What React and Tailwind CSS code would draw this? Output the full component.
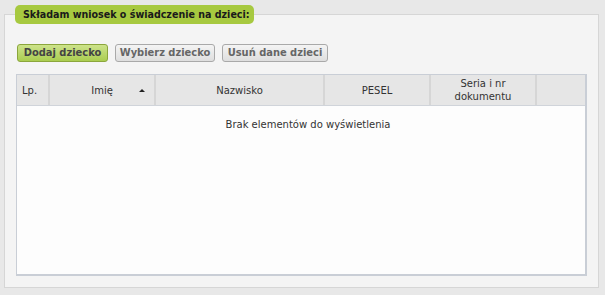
import React from "react";

const font = { fontFamily: '"DejaVu Sans", Verdana, sans-serif' };
const bold = { fontFamily: '"DejaVu Sans Condensed", "Liberation Sans", sans-serif' };

const cols = [
  { label: "Lp.", w: "w-[33px]", align: "text-left pl-[5px]" },
  { label: "Imię", w: "w-[106px]", sort: true },
  { label: "Nazwisko", w: "w-[169px]" },
  { label: "PESEL", w: "w-[106px]" },
  { label: "Seria i nr dokumentu", w: "w-[106px]", two: true },
  { label: "", w: "flex-1" },
];

const App = () => {
  return (
    <div
      className="w-[605px] h-[295px] bg-[#e8e8e8] pt-[5px] px-[4px] text-[#333]"
      style={font}
    >
      <div className="relative h-[274px] mt-[9px] mr-[2px] border border-[#d6d6d6] bg-[#f4f4f4] px-[11px] pt-[29px]">
        {/* legend */}
        <div
          className="absolute -top-[10px] left-[10px] h-[19px] w-[239px] pl-[8px] flex items-center rounded-[5px] bg-[#a7c940] text-[10.6px] font-bold text-[#1a1a1a]"
          style={bold}
        >
          Składam wniosek o świadczenie na dzieci:
        </div>

        {/* buttons */}
        <div className="flex gap-[7px] ml-[1px]" style={bold}>
          <button className="h-[18px] w-[91px] rounded-[3px] border border-[#8ba63c] bg-gradient-to-b from-[#cde38a] to-[#aacd4f] text-[11px] font-bold text-[#444]">
            Dodaj dziecko
          </button>
          <button className="h-[18px] w-[100px] rounded-[3px] border border-[#a9a9a9] bg-gradient-to-b from-[#f4f4f4] to-[#dedede] text-[11px] font-bold text-[#666]">
            Wybierz dziecko
          </button>
          <button className="h-[18px] w-[106px] rounded-[3px] border border-[#a9a9a9] bg-gradient-to-b from-[#f4f4f4] to-[#dedede] text-[11px] font-bold text-[#666]">
            Usuń dane dzieci
          </button>
        </div>

        {/* table */}
        <div className="mt-[12px] h-[202px] border border-[#c9ced6] border-r-2 border-b-2 bg-[#fdfdfd] flex flex-col">
          <div className="flex h-[31px] bg-[#e6e6e6] border-b border-[#d0d4da] text-[10px]">
            {cols.map((c, i) => (
              <div
                key={i}
                className={`${c.w} relative flex items-center ${
                  c.align ? c.align : "justify-center text-center"
                } ${i < cols.length - 1 ? "border-r-2 border-[#d6d6d6]" : ""} leading-[13px]`}
              >
                {c.two ? (
                  <span>
                    Seria i nr
                    <br />
                    dokumentu
                  </span>
                ) : (
                  c.label
                )}
                {c.sort && (
                  <span className="absolute right-[9px] top-[14px] w-0 h-0 border-l-[3px] border-r-[3px] border-b-[3px] border-l-transparent border-r-transparent border-b-[#222]" />
                )}
              </div>
            ))}
          </div>
          <div className="text-center text-[10px] pt-[11px] pl-[14px]">
            Brak elementów do wyświetlenia
          </div>
        </div>
      </div>
    </div>
  );
};

export default App;
